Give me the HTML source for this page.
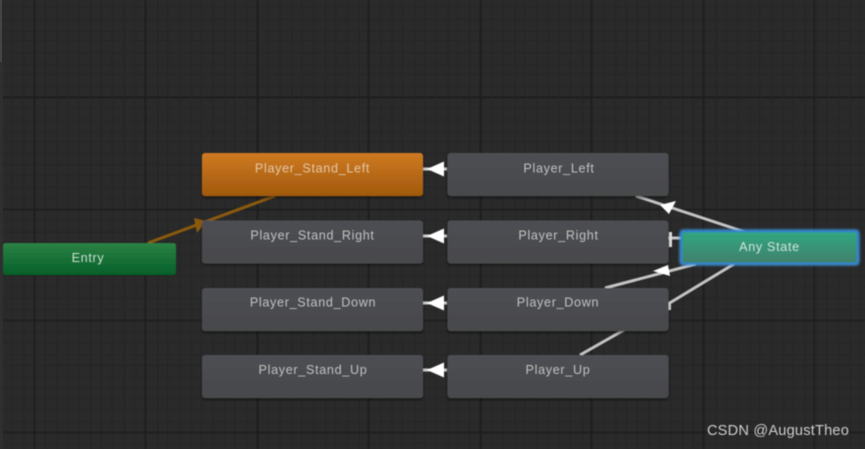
<!DOCTYPE html>
<html><head><meta charset="utf-8"><style>
html,body{margin:0;padding:0;width:865px;height:449px;overflow:hidden;background:#2a2a2a}
svg{display:block}
text{font-family:"Liberation Sans",sans-serif;text-anchor:middle;font-size:12.6px;letter-spacing:.68px;fill:#c2c2c2}
</style></head><body>
<svg width="865" height="449" viewBox="0 0 865 449" xmlns="http://www.w3.org/2000/svg">
<defs>
<pattern id="minor" x="0.5" y="7.6" width="11.17" height="11.17" patternUnits="userSpaceOnUse">
<path d="M0.5 0V11.17M0 0.5H11.17" stroke="#252525" stroke-width="1" fill="none"/>
</pattern>
<linearGradient id="g" x1="0" y1="0" x2="0" y2="1"><stop offset="0" stop-color="#4d4f53"/><stop offset="1" stop-color="#46484c"/></linearGradient>
<linearGradient id="o" x1="0" y1="0" x2="0" y2="1"><stop offset="0" stop-color="#cf7a22"/><stop offset="1" stop-color="#a0590c"/></linearGradient>
<linearGradient id="e" x1="0" y1="0" x2="0" y2="1"><stop offset="0" stop-color="#2c8244"/><stop offset="1" stop-color="#05602a"/></linearGradient>
<linearGradient id="a" x1="0" y1="0" x2="0" y2="1"><stop offset="0" stop-color="#30a67f"/><stop offset="1" stop-color="#41816d"/></linearGradient>
<filter id="s" x="-10%" y="-20%" width="120%" height="140%"><feGaussianBlur stdDeviation="0.55"/></filter>
<filter id="t" x="-10%" y="-20%" width="120%" height="140%"><feGaussianBlur stdDeviation="0.4"/></filter>
<filter id="b" x="-10%" y="-30%" width="120%" height="160%"><feGaussianBlur stdDeviation="1.2"/></filter>
<filter id="m"><feGaussianBlur stdDeviation="0.5"/></filter>
</defs>
<rect width="865" height="449" fill="#2a2a2a"/>
<g filter="url(#m)">
<rect width="865" height="449" fill="url(#minor)"/>
<path d="M34.5 0V449M145.5 0V449M257.5 0V449M368.5 0V449M480.5 0V449M591.5 0V449M703.5 0V449M814.5 0V449M0 97.5H865M0 209.5H865M0 320.5H865M0 432.5H865" stroke="#1b1b1b" stroke-width="1.2" fill="none"/>
</g>
<rect x="0" y="0" width="2" height="62" fill="#444"/>
<rect x="0" y="62" width="3" height="387" fill="#2f2f2f"/>

<g filter="url(#s)">
<path d="M148 243L275 196" stroke="#8a5a0c" stroke-width="3" fill="none"/>
<path d="M194 218L206 221L197 233Z" fill="#8a5a0c"/>
<path d="M636 196L745 232" stroke="#c4c4c4" stroke-width="3" fill="none"/>
<path d="M660 205L676 201L669 214Z" fill="#fff"/>
<path d="M605 288L696 264" stroke="#c4c4c4" stroke-width="3" fill="none"/>
<path d="M653 271L668 265L670 276Z" fill="#fff"/>
<path d="M580 355L624 330M668 304L734 264" stroke="#c4c4c4" stroke-width="3" fill="none"/>
<path d="M668 238H682" stroke="#c4c4c4" stroke-width="3" fill="none"/>
<rect x="669" y="232" width="3" height="15" fill="#ddd"/>
<rect x="668" y="302" width="3" height="8" fill="#ccc"/>
<path d="M423 169H447M423 236H447M423 303H447M423 370H447" stroke="#cfcfcf" stroke-width="3"/>
<g fill="#fff" stroke="none">
<path d="M427 169L444 161.500V176.500Z"/><path d="M427 236L444 228.500V243.500Z"/><path d="M427 303L444 295.500V310.500Z"/><path d="M427 370L444 362.500V377.500Z"/>
</g>
<g fill="#111" opacity=".45" filter="url(#b)">
<rect x="202" y="155" width="221" height="43" rx="3"/><rect x="447" y="155" width="221" height="43" rx="3"/>
<rect x="202" y="222" width="221" height="43" rx="3"/><rect x="447" y="222" width="221" height="43" rx="3"/>
<rect x="202" y="290" width="221" height="43" rx="3"/><rect x="447" y="290" width="221" height="43" rx="3"/>
<rect x="202" y="357" width="221" height="43" rx="3"/><rect x="447" y="357" width="221" height="43" rx="3"/>
</g>
<rect x="202" y="153" width="221" height="43" rx="3" fill="url(#o)"/>
<rect x="447.500" y="153" width="221" height="43" rx="3" fill="url(#g)"/>
<rect x="202" y="220.500" width="221" height="43" rx="3" fill="url(#g)"/>
<rect x="447.500" y="220.500" width="221" height="43" rx="3" fill="url(#g)"/>
<rect x="202" y="288" width="221" height="43" rx="3" fill="url(#g)"/>
<rect x="447.500" y="288" width="221" height="43" rx="3" fill="url(#g)"/>
<rect x="202" y="355" width="221" height="43" rx="3" fill="url(#g)"/>
<rect x="447.500" y="355" width="221" height="43" rx="3" fill="url(#g)"/>
<rect x="3" y="243" width="173" height="32" rx="2.500" fill="url(#e)"/>
<rect x="679.500" y="229.500" width="180" height="36" rx="4" fill="#3d8fd8" filter="url(#b)"/>
<rect x="681" y="231" width="177" height="33" rx="3.500" fill="#2f86c8"/>
<rect x="682.500" y="232.500" width="174" height="30" rx="2.500" fill="url(#a)"/>
</g>
<g filter="url(#t)">
<text x="312.500" y="172.500" style="fill:#e3c8aa">Player_Stand_Left</text>
<text x="559" y="172.500">Player_Left</text>
<text x="312.500" y="239.500">Player_Stand_Right</text>
<text x="558.500" y="239.500">Player_Right</text>
<text x="313" y="306.500">Player_Stand_Down</text>
<text x="558" y="306.500">Player_Down</text>
<text x="313" y="374">Player_Stand_Up</text>
<text x="558" y="374">Player_Up</text>
<text x="88" y="262" style="fill:#cfdfd3">Entry</text>
<text x="769.500" y="251" style="fill:#d0e5dd">Any State</text>
<text x="778" y="435" style="font-size:14.6px;letter-spacing:.2px;fill:#cfcfcf">CSDN @AugustTheo</text>
</g>
</svg>
</body></html>
